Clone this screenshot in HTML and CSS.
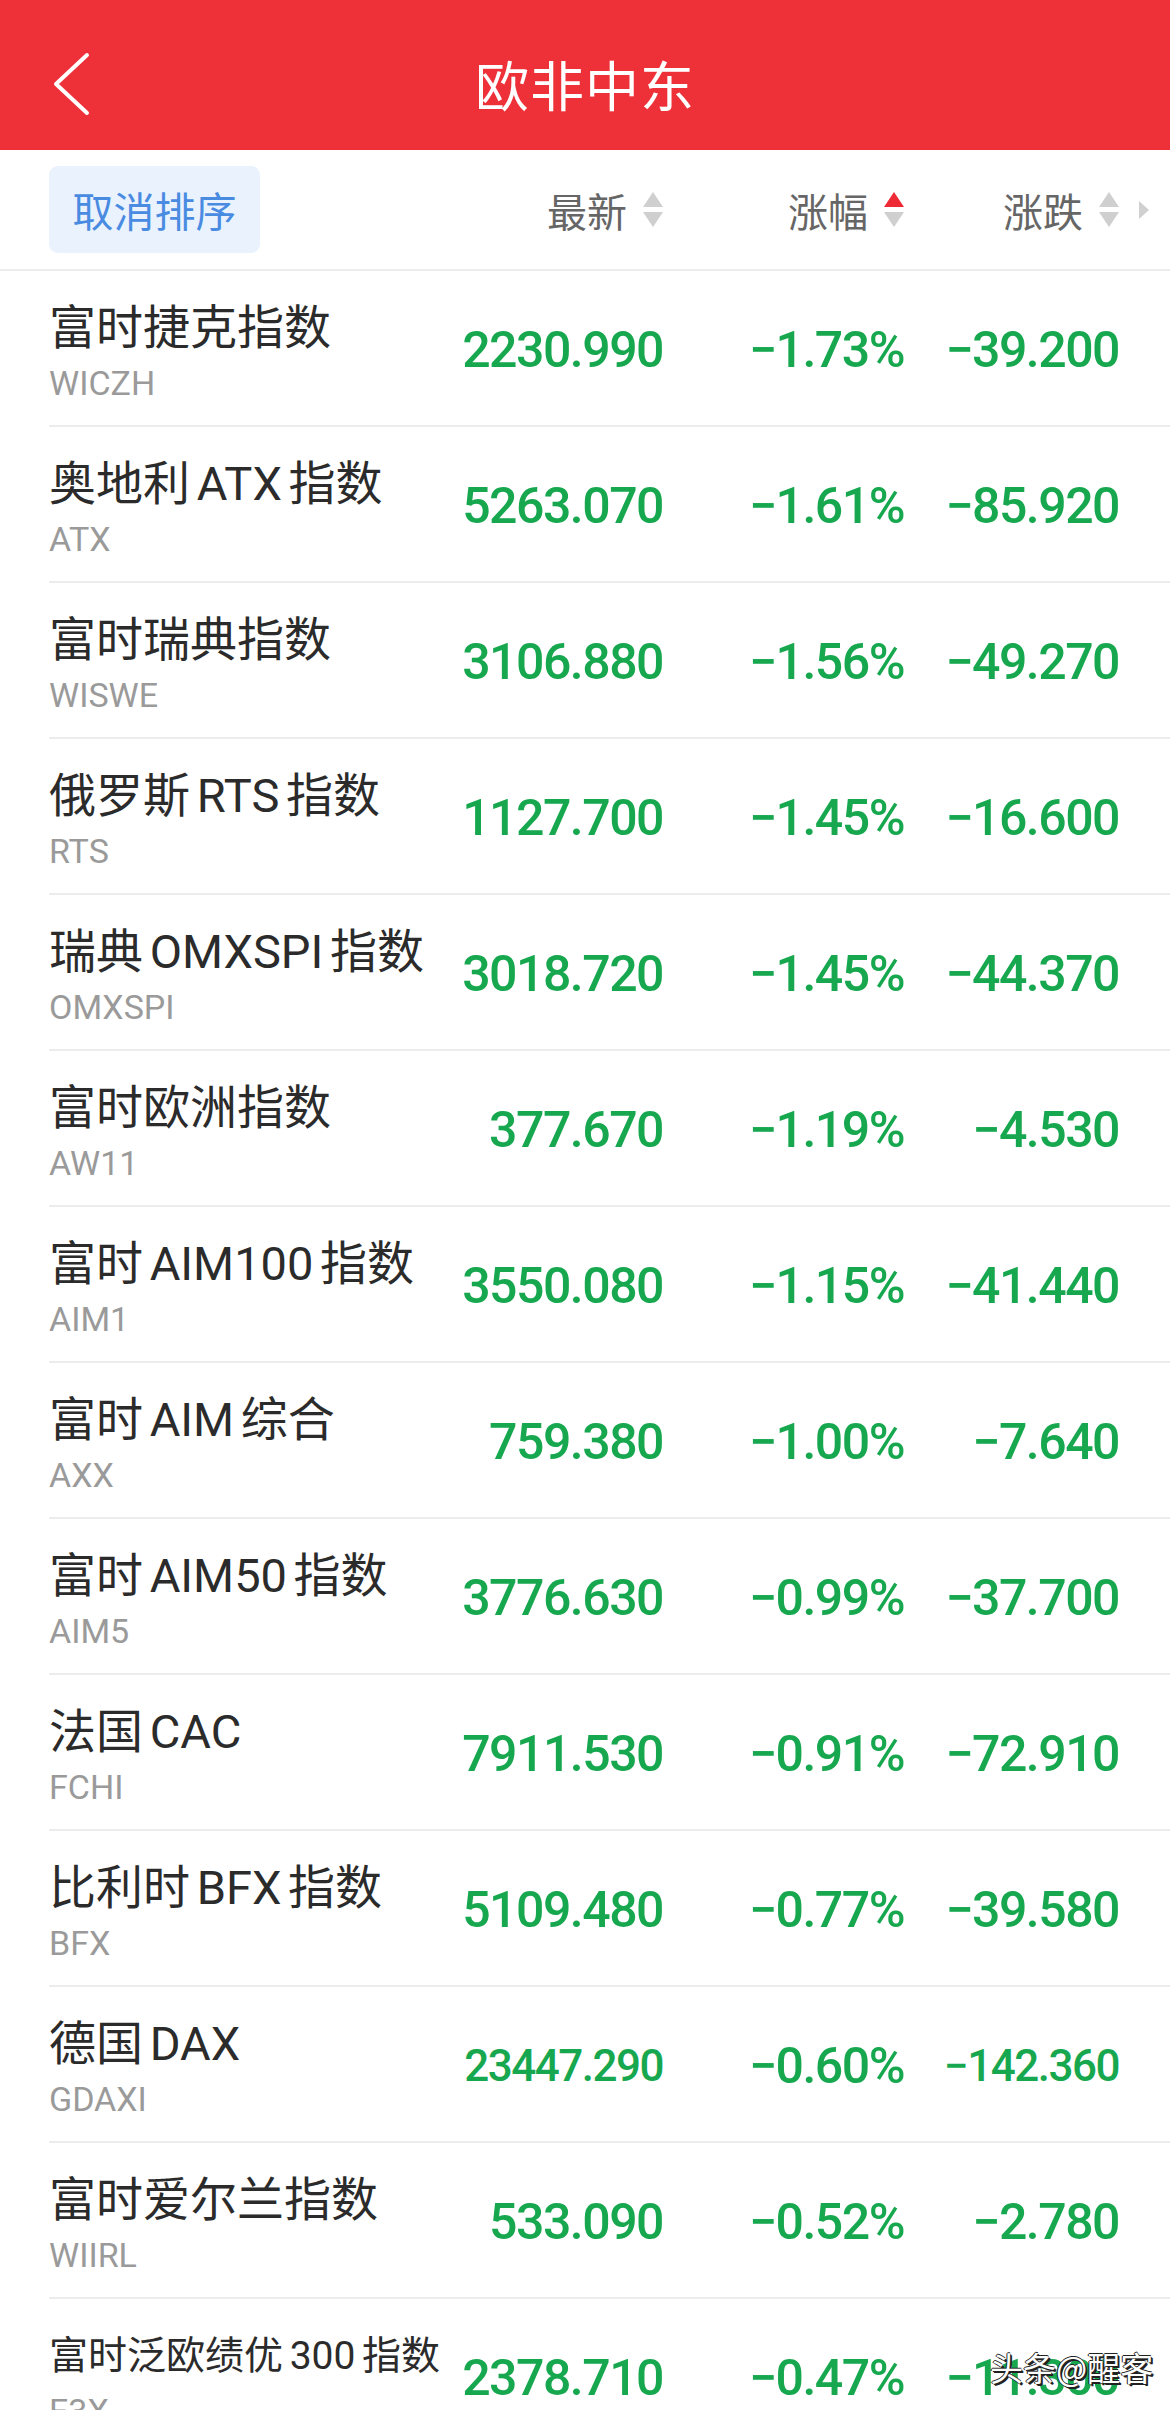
FILE: index.html
```html
<!DOCTYPE html>
<html lang="zh-CN">
<head>
<meta charset="utf-8">
<title>欧非中东</title>
<link rel="stylesheet" href="styles.css">
</head>
<body>
<div class="page">
  <header class="topbar">
    <div class="topbar-left">
      <svg class="back" width="40" height="64" viewBox="0 0 40 64"><path d="M35 3 L4 32 L35 61" fill="none" stroke="#fff" stroke-width="4" stroke-linecap="round" stroke-linejoin="round"/></svg>
    </div>
    <h1 class="title">欧非中东</h1>
    <div class="topbar-right"></div>
  </header>

  <div class="sortbar">
    <div class="sort-cancel-wrap"><span class="sort-cancel">取消排序</span></div>
    <div class="sort-col"><span class="sort-label">最新</span><span class="arrows"><i class="tri up"></i><i class="tri down"></i></span></div>
    <div class="sort-col"><span class="sort-label">涨幅</span><span class="arrows"><i class="tri up active"></i><i class="tri down"></i></span></div>
    <div class="sort-col"><span class="sort-label">涨跌</span><span class="arrows"><i class="tri up"></i><i class="tri down"></i></span><i class="more"></i></div>
  </div>

  <div class="list">
    <div class="row"><div class="name-cell"><div class="name">富时捷克指数</div><div class="code">WICZH</div></div><div class="num">2230.990</div><div class="num">−1.73%</div><div class="num">−39.200</div></div>
    <div class="row"><div class="name-cell"><div class="name">奥地利 ATX 指数</div><div class="code">ATX</div></div><div class="num">5263.070</div><div class="num">−1.61%</div><div class="num">−85.920</div></div>
    <div class="row"><div class="name-cell"><div class="name">富时瑞典指数</div><div class="code">WISWE</div></div><div class="num">3106.880</div><div class="num">−1.56%</div><div class="num">−49.270</div></div>
    <div class="row"><div class="name-cell"><div class="name">俄罗斯 RTS 指数</div><div class="code">RTS</div></div><div class="num">1127.700</div><div class="num">−1.45%</div><div class="num">−16.600</div></div>
    <div class="row"><div class="name-cell"><div class="name">瑞典 OMXSPI 指数</div><div class="code">OMXSPI</div></div><div class="num">3018.720</div><div class="num">−1.45%</div><div class="num">−44.370</div></div>
    <div class="row"><div class="name-cell"><div class="name">富时欧洲指数</div><div class="code">AW11</div></div><div class="num">377.670</div><div class="num">−1.19%</div><div class="num">−4.530</div></div>
    <div class="row"><div class="name-cell"><div class="name">富时 AIM100 指数</div><div class="code">AIM1</div></div><div class="num">3550.080</div><div class="num">−1.15%</div><div class="num">−41.440</div></div>
    <div class="row"><div class="name-cell"><div class="name">富时 AIM 综合</div><div class="code">AXX</div></div><div class="num">759.380</div><div class="num">−1.00%</div><div class="num">−7.640</div></div>
    <div class="row"><div class="name-cell"><div class="name">富时 AIM50 指数</div><div class="code">AIM5</div></div><div class="num">3776.630</div><div class="num">−0.99%</div><div class="num">−37.700</div></div>
    <div class="row"><div class="name-cell"><div class="name">法国 CAC</div><div class="code">FCHI</div></div><div class="num">7911.530</div><div class="num">−0.91%</div><div class="num">−72.910</div></div>
    <div class="row"><div class="name-cell"><div class="name">比利时 BFX 指数</div><div class="code">BFX</div></div><div class="num">5109.480</div><div class="num">−0.77%</div><div class="num">−39.580</div></div>
    <div class="row"><div class="name-cell"><div class="name">德国 DAX</div><div class="code">GDAXI</div></div><div class="num small">23447.290</div><div class="num">−0.60%</div><div class="num small">−142.360</div></div>
    <div class="row"><div class="name-cell"><div class="name">富时爱尔兰指数</div><div class="code">WIIRL</div></div><div class="num">533.090</div><div class="num">−0.52%</div><div class="num">−2.780</div></div>
    <div class="row"><div class="name-cell"><div class="name long">富时泛欧绩优 300 指数</div><div class="code">E3X</div></div><div class="num">2378.710</div><div class="num">−0.47%</div><div class="num">−11.300</div></div>
  </div>

  <div class="watermark">头条@醒客</div>
</div>
</body>
</html>
```

FILE: styles.css
```css
html, body {
  margin: 0;
  padding: 0;
  background: #fff;
}

body {
  font-family: Roboto, "Noto Sans CJK SC", sans-serif;
  overflow: hidden;
}

.page {
  position: relative;
  width: 1170px;
  min-height: 2410px;
}

.topbar {
  height: 132px;
  padding-top: 18px;
  background: #ee3039;
  display: grid;
  grid-template-columns: 1fr auto 1fr;
  align-items: center;
}

.topbar-left {
  display: flex;
  align-items: center;
}

.back {
  display: block;
  margin-left: 52px;
}

.title {
  margin: 0;
  color: #fff;
  font-family: "Noto Sans CJK SC", sans-serif;
  font-weight: 400;
  font-size: 54px;
  line-height: 64px;
  letter-spacing: 1px;
}

.sortbar {
  height: 119px;
  border-bottom: 2px solid #ececec;
  padding: 0 51px 0 49px;
  display: grid;
  grid-template-columns: minmax(0, 1fr) 230px 241px 215px;
  align-items: center;
}

.sort-cancel-wrap {
  display: flex;
}

.sort-cancel {
  display: flex;
  align-items: center;
  justify-content: center;
  width: 211px;
  height: 87px;
  border-radius: 9px;
  background: #e9f2fd;
  color: #4a8be2;
  font-family: "Noto Sans CJK SC", sans-serif;
  font-size: 41px;
  line-height: 1;
}

.sort-col {
  display: flex;
  justify-content: flex-end;
  align-items: center;
  gap: 16px;
}

.sort-label {
  font-family: "Noto Sans CJK SC", sans-serif;
  font-size: 40px;
  line-height: 48px;
  color: #666;
}

.arrows {
  display: flex;
  flex-direction: column;
  gap: 5px;
  width: 20px;
}

.tri {
  display: block;
  width: 0;
  height: 0;
  border-left: 10px solid transparent;
  border-right: 10px solid transparent;
}

.tri.up {
  border-bottom: 15px solid #cfcfcf;
}

.tri.down {
  border-top: 15px solid #cfcfcf;
}

.tri.up.active {
  border-bottom-color: #ee2a36;
}

.more {
  display: block;
  width: 0;
  height: 0;
  border-top: 9px solid transparent;
  border-bottom: 9px solid transparent;
  border-left: 10px solid #d0d0d0;
  margin-left: 4px;
  margin-right: -30px;
}

.row {
  height: 154px;
  margin-left: 49px;
  padding-right: 51px;
  border-bottom: 2px solid #ececec;
  display: grid;
  grid-template-columns: minmax(0, 1fr) 230px 241px 215px;
  align-items: center;
}

.name-cell {
  align-self: start;
  padding-top: 29px;
  white-space: nowrap;
}

.name {
  font-size: 47px;
  line-height: 56px;
  color: #2b2b2b;
  word-spacing: -5px;
}

.name.long {
  font-size: 39px;
  word-spacing: -3px;
}

.code {
  margin-top: 7px;
  font-size: 34px;
  line-height: 40px;
  color: #9a9a9a;
}

.num {
  text-align: right;
  font-family: Roboto, "Liberation Sans", sans-serif;
  font-weight: 500;
  font-size: 50px;
  line-height: 60px;
  letter-spacing: -1.5px;
  color: #17a84f;
  white-space: nowrap;
  padding-top: 3px;
}

.num.small {
  font-size: 44px;
}

.watermark {
  position: absolute;
  left: 990px;
  top: 2348px;
  font-family: "Noto Sans CJK SC", sans-serif;
  font-size: 33px;
  line-height: 38px;
  color: #fff;
  text-shadow: 1px 1px 0 #222, 2px 2px 0 #222, -1px 0 0 #222, 0 -1px 0 #222;
}
```
